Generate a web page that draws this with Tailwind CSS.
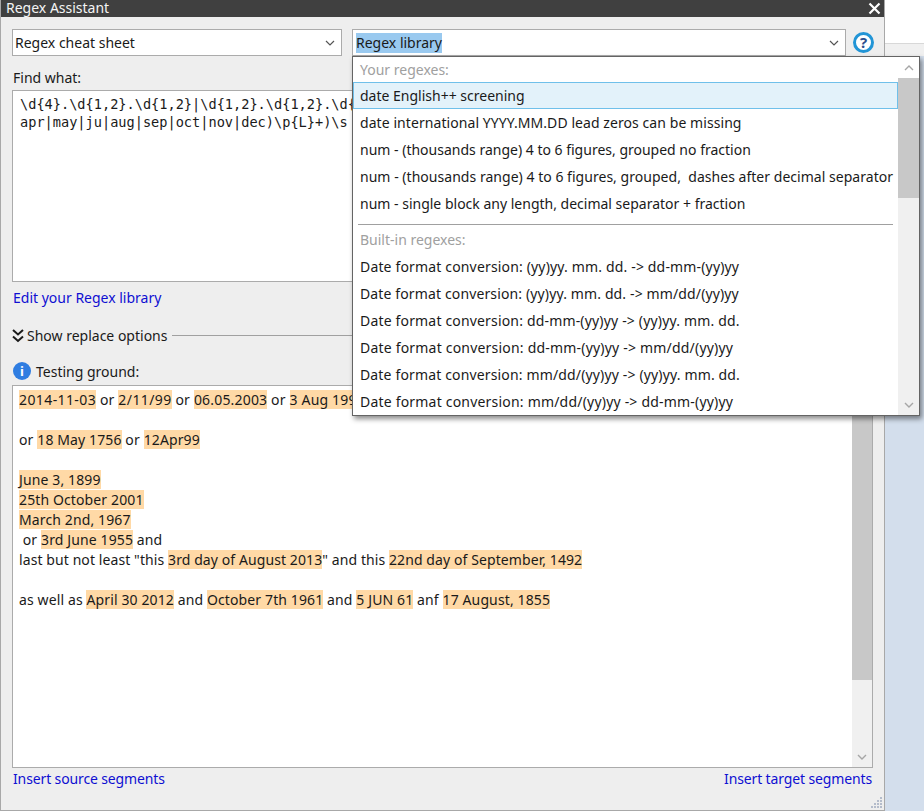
<!DOCTYPE html>
<html>
<head>
<meta charset="utf-8">
<script src="https://cdn.jsdelivr.net/npm/@tailwindcss/browser@4"></script>
</head>
<body class="m-0">
<div class="relative flex w-[924px] h-[811px] overflow-hidden bg-[#d3deec] font-['Noto_Sans',sans-serif] text-[14px] text-[#1a1a1a]">
  <!-- Dialog -->
  <div class="flex flex-col w-[885px] h-[811px] shrink-0 bg-[#eeeeee] border-x border-b border-[#a8a8a8]">
    <div class="flex items-center justify-between h-[17px] bg-[#404040] text-[#f4f4f4] pl-[5px] pr-[3px] overflow-hidden">
      <span class="leading-[17px] -mt-[2px]">Regex Assistant</span>
      <svg width="13" height="13" viewBox="0 0 13 13"><path d="M1.5 1.5L11.5 11.5M11.5 1.5L1.5 11.5" stroke="#fff" stroke-width="2.2"/></svg>
    </div>
    <div class="flex flex-col flex-1 min-h-0 px-[11px]">
      <div class="flex items-center h-[27px] mt-[12px]">
        <div class="flex items-center justify-between shrink-0 w-[330px] h-[27px] bg-white border border-[#ababab] pl-[2px] pr-[6px]">
          <span>Regex cheat sheet</span>
          <svg width="10" height="6" viewBox="0 0 10 6"><path d="M1 1L5 5L9 1" fill="none" stroke="#555" stroke-width="1.2"/></svg>
        </div>
        <div class="flex items-center justify-between shrink-0 w-[494px] h-[27px] ml-[10px] bg-white border border-[#ababab] pl-[3px] pr-[6px]">
          <span class="bg-[#99c9ef] leading-[20px] h-[20px]">Regex library</span>
          <svg width="10" height="6" viewBox="0 0 10 6"><path d="M1 1L5 5L9 1" fill="none" stroke="#555" stroke-width="1.2"/></svg>
        </div>
        <div class="flex items-center justify-center shrink-0 w-[21px] h-[21px] ml-[7px] rounded-full border-[3px] border-[#2295d6] bg-white text-[#2b4f8f] text-[15px] font-bold leading-none">?</div>
      </div>
      <div class="flex items-end h-[34px] pb-[2px] pl-[1px]">Find what:</div>
      <div class="h-[192px] bg-white border border-[#ababab] pl-[7px] pt-[4px] font-['DejaVu_Sans_Mono',monospace] text-[13.62px] leading-[18px] whitespace-nowrap overflow-hidden">
        <div>\d{4}.\d{1,2}.\d{1,2}|\d{1,2}.\d{1,2}.\d{2,4}|\d{1,2}</div>
        <div>apr|may|ju|aug|sep|oct|nov|dec)\p{L}+)\s</div>
      </div>
      <div class="flex items-center h-[31px] pl-[1px] text-[#0f0fd2]">Edit your Regex library</div>
      <div class="flex items-center h-[45px]">
        <svg class="mr-[3px]" width="12" height="16" viewBox="0 0 12 16"><path d="M1 2L6 6.5L11 2M1 8.5L6 13L11 8.5" fill="none" stroke="#1a1a1a" stroke-width="2"/></svg>
        <span>Show replace options</span>
        <div class="flex-1 h-px ml-[5px] bg-[#a0a0a0]"></div>
      </div>
      <div class="flex items-center h-[27px] pb-[1px]">
        <div class="flex items-center justify-center w-[18px] h-[18px] ml-[1px] mr-[5px] rounded-full bg-[#2f7de1] text-white text-[13px] font-bold leading-none">i</div>
        <span>Testing ground:</span>
      </div>
      <div class="flex h-[383px] bg-white border border-[#ababab]">
        <div class="flex-1 min-w-0 pl-[6px] pt-[4px] leading-[20px] tracking-[0.12px] whitespace-nowrap">
          <div class="tracking-[0.18px]"><span class="bg-[#ffd9a6] tracking-[0.4px]">2014-11-03</span> or <span class="bg-[#ffd9a6] tracking-[0.4px]">2/11/99</span> or <span class="bg-[#ffd9a6]">06.05.2003</span> or <span class="bg-[#ffd9a6]">3 Aug 1999</span></div>
          <div class="h-[20px]"></div>
          <div>or <span class="bg-[#ffd9a6]">18 May 1756</span> or <span class="bg-[#ffd9a6]">12Apr99</span></div>
          <div class="h-[20px]"></div>
          <div><span class="bg-[#ffd9a6]">June 3, 1899</span></div>
          <div><span class="bg-[#ffd9a6]">25th October 2001</span></div>
          <div><span class="bg-[#ffd9a6]">March 2nd, 1967</span></div>
          <div class="whitespace-pre"> or <span class="bg-[#ffd9a6]">3rd June 1955</span> and</div>
          <div class="tracking-[0.09px]">last but not least "this <span class="bg-[#ffd9a6]">3rd day of August 2013</span>" and this <span class="bg-[#ffd9a6]">22nd day of September, 1492</span></div>
          <div class="h-[20px]"></div>
          <div>as well as <span class="bg-[#ffd9a6]">April 30 2012</span> and <span class="bg-[#ffd9a6]">October 7th 1961</span> and <span class="bg-[#ffd9a6]">5 JUN 61</span> anf <span class="bg-[#ffd9a6]">17 August, 1855</span></div>
        </div>
        <div class="flex flex-col w-[20px] shrink-0 bg-[#f0f0f0]">
          <div class="h-[20px]"></div>
          <div class="h-[274px] bg-[#c8c8c8]"></div>
          <div class="flex-1"></div>
          <div class="flex items-center justify-center h-[20px]">
            <svg width="10" height="6" viewBox="0 0 10 6"><path d="M1 1L5 5L9 1" fill="none" stroke="#a6a6a6" stroke-width="1.4"/></svg>
          </div>
        </div>
      </div>
      <div class="flex items-center justify-between h-[21px] px-[1px] text-[#0f0fd2] tracking-[-0.13px]">
        <span>Insert source segments</span>
        <span>Insert target segments</span>
      </div>
      <div class="relative flex-1">
        <svg class="absolute right-[-10px] bottom-0" width="14" height="14" viewBox="0 0 14 14" fill="#b4bccb"><rect x="11" y="1" width="2" height="2"/><rect x="8" y="4" width="2" height="2"/><rect x="11" y="4" width="2" height="2"/><rect x="5" y="7" width="2" height="2"/><rect x="8" y="7" width="2" height="2"/><rect x="11" y="7" width="2" height="2"/><rect x="2" y="10" width="2" height="2"/><rect x="5" y="10" width="2" height="2"/><rect x="8" y="10" width="2" height="2"/><rect x="11" y="10" width="2" height="2"/></svg>
      </div>
    </div>
  </div>
  <!-- Window behind -->
  <div class="flex flex-col flex-1">
    <div class="h-[43px] bg-white"></div>
    <div class="h-[13px] bg-[#f0f0f0] border-t border-[#d8d8d8]"></div>
  </div>
  <!-- Dropdown popup -->
  <div class="absolute left-[352px] top-[56px] flex w-[568px] h-[360px] bg-white border border-[#646464] shadow-[2px_3px_5px_rgba(0,0,0,0.45)]">
    <div class="flex flex-col flex-1 min-w-0 whitespace-nowrap">
      <div class="flex items-center h-[25px] pl-[7px] text-[#a0a0a0]">Your regexes:</div>
      <div class="flex items-center h-[27px] pl-[6px] bg-[#e3f2fa] border border-[#6fc0ea]">date English++ screening</div>
      <div class="flex items-center h-[27px] pl-[7px] tracking-[0.07px]">date international YYYY.MM.DD lead zeros can be missing</div>
      <div class="flex items-center h-[27px] pl-[7px]">num - (thousands range) 4 to 6 figures, grouped no fraction</div>
      <div class="flex items-center h-[27px] pl-[7px] tracking-[0.03px] whitespace-pre">num - (thousands range) 4 to 6 figures, grouped,  dashes after decimal separator</div>
      <div class="flex items-center h-[27px] pl-[7px]">num - single block any length, decimal separator + fraction</div>
      <div class="h-[10px] pt-[7px] pl-[5px] pr-[5px]"><div class="h-px bg-[#a0a0a0]"></div></div>
      <div class="flex items-center h-[27px] pl-[7px] text-[#a0a0a0]">Built-in regexes:</div>
      <div class="flex items-center h-[27px] pl-[7px] tracking-[0.16px]">Date format conversion: (yy)yy. mm. dd. -&gt; dd-mm-(yy)yy</div>
      <div class="flex items-center h-[27px] pl-[7px] tracking-[0.13px]">Date format conversion: (yy)yy. mm. dd. -&gt; mm/dd/(yy)yy</div>
      <div class="flex items-center h-[27px] pl-[7px] tracking-[0.17px]">Date format conversion: dd-mm-(yy)yy -&gt; (yy)yy. mm. dd.</div>
      <div class="flex items-center h-[27px] pl-[7px] tracking-[0.2px]">Date format conversion: dd-mm-(yy)yy -&gt; mm/dd/(yy)yy</div>
      <div class="flex items-center h-[27px] pl-[7px] tracking-[0.15px]">Date format conversion: mm/dd/(yy)yy -&gt; (yy)yy. mm. dd.</div>
      <div class="flex items-center h-[27px] pl-[7px] tracking-[0.2px]">Date format conversion: mm/dd/(yy)yy -&gt; dd-mm-(yy)yy</div>
    </div>
    <div class="flex flex-col w-[21px] shrink-0 bg-[#f0f0f0]">
      <div class="flex items-center justify-center h-[21px] bg-white">
        <svg width="10" height="6" viewBox="0 0 10 6"><path d="M1 5L5 1L9 5" fill="none" stroke="#a6a6a6" stroke-width="1.4"/></svg>
      </div>
      <div class="h-[120px] bg-[#c8c8c8]"></div>
      <div class="flex-1"></div>
      <div class="flex items-center justify-center h-[20px]">
        <svg width="10" height="6" viewBox="0 0 10 6"><path d="M1 1L5 5L9 1" fill="none" stroke="#a6a6a6" stroke-width="1.4"/></svg>
      </div>
    </div>
  </div>
</div>
</body>
</html>
